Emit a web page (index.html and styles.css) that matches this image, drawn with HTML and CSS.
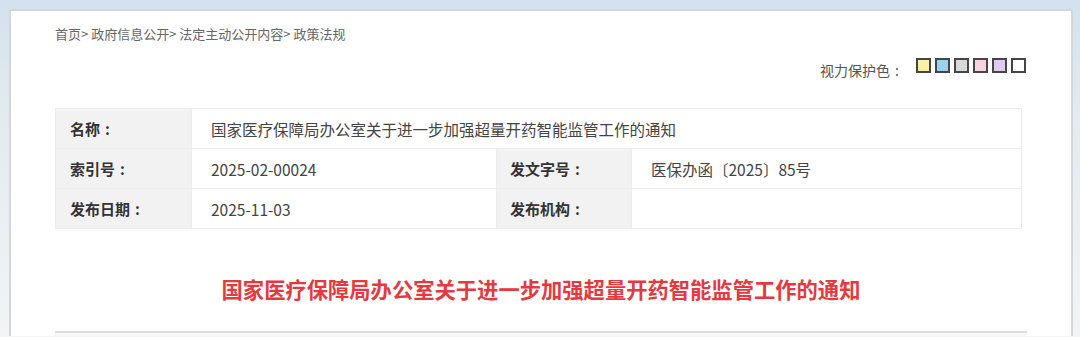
FILE: index.html
```html
<!DOCTYPE html>
<html lang="zh-CN">
<head>
    <meta charset="UTF-8">
    <meta name="viewport" content="width=device-width, initial-scale=1.0">
    <title>政策法规</title>
    <link rel="stylesheet" href="styles.css">
</head>
<body>
    <div class="page">
        <div class="main-box">
            <!-- Breadcrumb -->
            <div class="crumb">
                <a href="#">首页</a>&gt; <a href="#">政府信息公开</a>&gt; <a href="#">法定主动公开内容</a>&gt; <a href="#">政策法规</a>
            </div>

            <!-- Eye protection colors -->
            <div class="eye-bar">
                <span class="eye-label">视力保护色<span class="colon">:</span></span>
                <span class="eye-color c-yellow"></span>
                <span class="eye-color c-blue"></span>
                <span class="eye-color c-grey"></span>
                <span class="eye-color c-pink"></span>
                <span class="eye-color c-purple"></span>
                <span class="eye-color c-white"></span>
            </div>

            <!-- Document info -->
            <table class="info-table">
                <tr>
                    <td class="label">名称<span class="colon">:</span></td>
                    <td class="value" colspan="3">国家医疗保障局办公室关于进一步加强超量开药智能监管工作的通知</td>
                </tr>
                <tr>
                    <td class="label">索引号<span class="colon">:</span></td>
                    <td class="value col2">2025-02-00024</td>
                    <td class="label col3">发文字号<span class="colon">:</span></td>
                    <td class="value">医保办函〔2025〕85号</td>
                </tr>
                <tr>
                    <td class="label">发布日期<span class="colon">:</span></td>
                    <td class="value col2">2025-11-03</td>
                    <td class="label col3">发布机构<span class="colon">:</span></td>
                    <td class="value"></td>
                </tr>
            </table>

            <h1 class="doc-title">国家医疗保障局办公室关于进一步加强超量开药智能监管工作的通知</h1>

            <div class="doc-body"></div>
        </div>
    </div>
</body>
</html>
```

FILE: styles.css
```css
html, body {
    margin: 0;
    padding: 0;
}
body {
    font-family: "Noto Sans CJK SC", "Noto Sans", sans-serif;
    background: linear-gradient(to bottom, #d3e2ee 0px, #e3ebf1 120px, #f2f4f5 337px);
    height: 337px;
    overflow: hidden;
}
.page {
    padding: 9px 7px 0 9px;
}
.main-box {
    background: #fff;
    border: 2px solid #d4d6d8;
    border-bottom: none;
    padding: 13px 44px 0 44px;
}

/* full-width colon, centred in its box */
.colon {
    display: inline-block;
    width: 1em;
    text-align: center;
}

/* Breadcrumb */
.crumb {
    font-size: 13px;
    line-height: 20px;
    color: #666;
}
.crumb a {
    color: #666;
    text-decoration: none;
}

/* Eye protection */
.eye-bar {
    display: flex;
    justify-content: flex-end;
    align-items: flex-start;
    margin-top: 14px;
    padding-right: 1px;
    height: 22px;
}
.eye-label {
    font-size: 14px;
    line-height: 20px;
    color: #555;
    margin-top: 2px;
    margin-right: 8px;
}
.eye-color {
    width: 11px;
    height: 11px;
    border: 2px solid #454545;
    margin-left: 4px;
}
.c-yellow { background: #f8f3a4; }
.c-blue { background: #9ad2ee; }
.c-grey { background: #d9d9d9; }
.c-pink { background: #f9d3dc; }
.c-purple { background: #e0c9f5; }
.c-white { background: #fff; }

/* Info table */
.info-table {
    width: 967px;
    margin-top: 28px;
    border-collapse: collapse;
}
.info-table td {
    height: 39px;
    padding: 0;
    border: 1px solid #ededed;
}
.info-table .label {
    width: 121px;
    padding-left: 14px;
    background: #f2f2f2;
    color: #333;
    font-size: 15px;
    font-weight: bold;
}
.info-table .value {
    padding-left: 19px;
    color: #444;
    font-size: 15.5px;
}
.info-table .col2 {
    width: 285px;
}
.info-table .col3 {
    padding-left: 13px;
}

/* Title */
.doc-title {
    margin: 45px 0 0 0;
    text-align: center;
    font-size: 21.3px;
    line-height: 30px;
    font-weight: bold;
    color: #e5393f;
}
.doc-body {
    margin-top: 27px;
    width: 972px;
    height: 3px;
    border-top: 2px solid #dedede;
    background: #f8f8f8;
}
```
